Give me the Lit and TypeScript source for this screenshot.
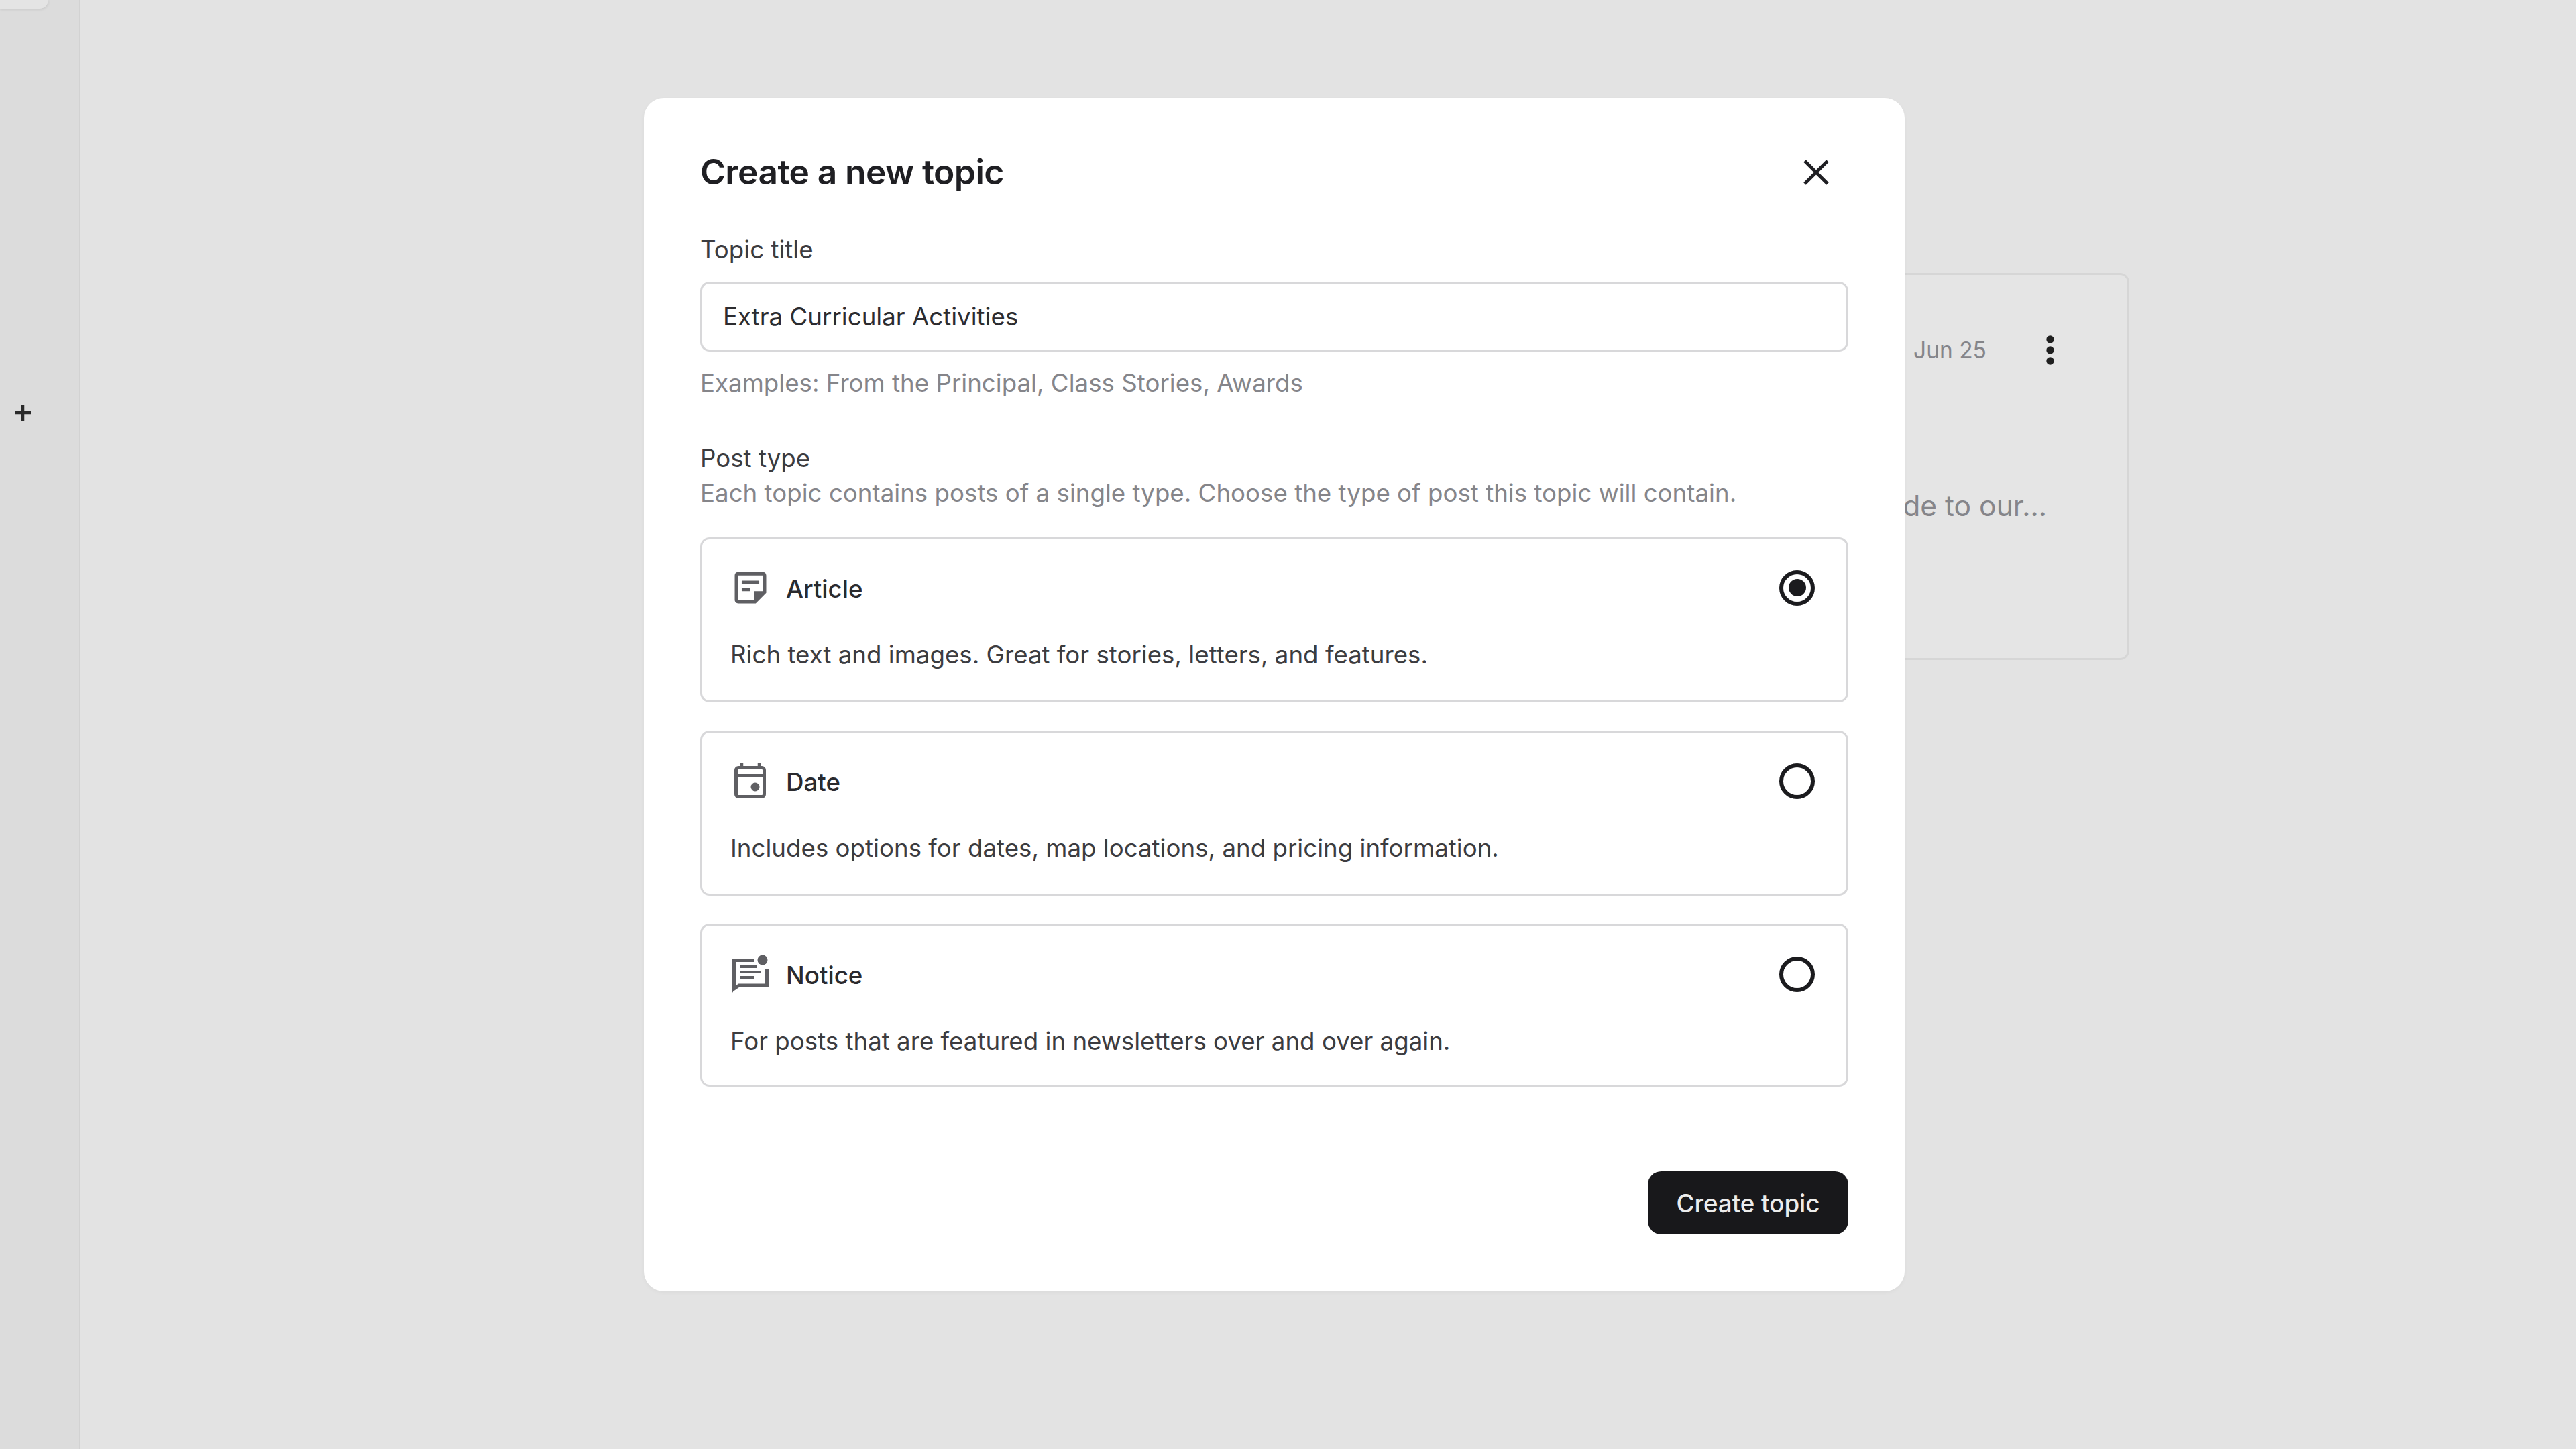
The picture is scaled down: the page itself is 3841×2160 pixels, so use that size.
import { LitElement, html, css, svg } from "lit";
import { customElement } from "lit/decorators.js";

const stickyIcon = svg`<svg class="ico" viewBox="0.5 0.5 23 23"><path fill="currentColor" d="M19,5v9l-5,0l0,5L5,19V5H19 M19,3H5C3.9,3,3,3.9,3,5v14c0,1.1,0.9,2,2,2h10l6-6V5C21,3.9,20.1,3,19,3z M12,14H7v-2h5V14z M17,10H7V8h10V10z"/></svg>`;
const calIcon = svg`<svg class="ico" viewBox="0 0 60 60"><g fill="none" stroke="currentColor"><rect x="8.5" y="10.5" width="42" height="43" rx="3.5" stroke-width="5"/><path d="M8 22.5H51" stroke-width="5"/><path d="M17 3V10M43 3V10" stroke-width="4.5"/></g><circle cx="37" cy="39" r="6.5" fill="currentColor"/></svg>`;
const noticeIcon = svg`<svg class="ico" viewBox="0 0 60 60"><path fill="none" stroke="currentColor" stroke-width="5" d="M36 9.5H5.5V52L13 47H54.5V22"/><path fill="currentColor" d="M3 44H8V50L3 58Z"/><path fill="none" stroke="currentColor" stroke-width="4" d="M14 19H40M14 27H46M14 35H35"/><circle cx="48" cy="9" r="7.5" fill="currentColor"/></svg>`;

const options = [
  { name: "Article", desc: "Rich text and images. Great for stories, letters, and features.", icon: stickyIcon, on: true },
  { name: "Date", desc: "Includes options for dates, map locations, and pricing information.", icon: calIcon, on: false },
  { name: "Notice", desc: "For posts that are featured in newsletters over and over again.", icon: noticeIcon, on: false },
];

@customElement("app-root")
export class AppRoot extends LitElement {
  static styles = css`
    :host {
      display: block;
      position: relative;
      width: 3841px;
      height: 2160px;
      overflow: hidden;
      background: #e3e3e3;
      font-family: Inter, "Noto Sans", sans-serif;
    }
    .page { display: flex; width: 100%; height: 100%; }
    .side {
      box-sizing: border-box;
      width: 120px;
      flex: none;
      background: #dcdcdc;
      border-right: 2px solid #d2d2d2;
      display: flex;
      flex-direction: column;
      align-items: flex-start;
    }
    .tab {
      width: 72px;
      height: 13px;
      background: #e4e4e4;
      border-radius: 0 0 16px 0;
      box-shadow: 0 1px 4px rgba(0, 0, 0, 0.12);
    }
    .plus { width: 28px; height: 28px; margin: 588px 0 0 20px; color: #2a2a2a; }
    .main {
      flex: 1;
      display: flex;
      justify-content: flex-end;
      align-items: flex-start;
      padding: 407px 666px 0 0;
    }
    .bgcard {
      box-sizing: border-box;
      width: 1000px;
      height: 577px;
      background: #e5e5e5;
      border: 3px solid #d6d6d6;
      border-radius: 14px;
      display: flex;
      flex-direction: column;
      align-items: flex-end;
      padding: 90px 109px 0 0;
    }
    .bgrow { display: flex; align-items: center; gap: 89px; height: 44px; }
    .date { font-size: 33.5px; line-height: 44px; color: #85858a; }
    .dots { width: 12px; height: 44px; }
    .snippet {
      margin: 184px 11px 0 0;
      font-size: 42.6px;
      line-height: 52px;
      color: #85858a;
    }
    .modal {
      position: absolute;
      left: 960px;
      top: 146px;
      box-sizing: border-box;
      width: 1880px;
      height: 1779px;
      padding: 85px 84px 85px 84px;
      background: #fff;
      border-radius: 30px;
      display: flex;
      flex-direction: column;
      box-shadow: 0 2px 6px rgba(0, 0, 0, 0.04);
    }
    .head { display: flex; justify-content: space-between; align-items: center; height: 52px; }
    h1 { margin: 0 0 2px; font-size: 51.5px; line-height: 50px; font-weight: 600; color: #1f1f23; letter-spacing: -0.6px; }
    .close { width: 44px; height: 44px; margin-right: 26px; color: #1f1f23; }
    .label { font-size: 36.7px; line-height: 50px; color: #3c3c40; }
    .l1 { margin-top: 64px; }
    .input {
      box-sizing: border-box;
      height: 104px;
      margin-top: 23px;
      padding: 0 0 2px 31px;
      display: flex;
      align-items: center;
      border: 3px solid #d8d8da;
      border-radius: 14px;
      font-size: 36.7px;
      color: #2c2c30;
    }
    .hint { font-size: 36.7px; line-height: 50px; color: #85858a; }
    .h1 { margin-top: 22px; }
    .l2 { margin-top: 62px; }
    .h2 { margin-top: 2px; }
    .opts { display: flex; flex-direction: column; gap: 42px; margin-top: 41px; }
    .opt {
      box-sizing: border-box;
      height: 246px;
      padding: 42px 47px 0 42px;
      border: 3px solid #d8d8da;
      border-radius: 14px;
      display: flex;
      flex-direction: column;
    }
    .opt.last { height: 243px; }
    .optrow { display: flex; align-items: center; height: 60px; }
    .ico { width: 60px; height: 60px; color: #5f5f63; flex: none; }
    .name { margin-left: 23px; flex: 1; font-size: 36.7px; font-weight: 500; color: #2a2a2e; padding-top: 3px; }
    .radio {
      box-sizing: border-box;
      width: 53px;
      height: 53px;
      border: 6px solid #1b1b1e;
      border-radius: 50%;
      display: flex;
      align-items: center;
      justify-content: center;
    }
    .radio i { width: 26px; height: 26px; border-radius: 50%; background: #1b1b1e; }
    .desc { margin-top: 45px; font-size: 36.7px; line-height: 50px; color: #3c3c40; }
    .foot { margin-top: auto; display: flex; justify-content: flex-end; }
    .btn {
      box-sizing: border-box;
      width: 299px;
      height: 94px;
      display: flex;
      align-items: center;
      justify-content: center;
      border-radius: 20px;
      background: #18181b;
      color: #ececec;
      font-size: 36.7px;
      font-weight: 500;
    }
  `;

  render() {
    return html`
      <div class="page">
        <aside class="side">
          <div class="tab"></div>
          <svg class="plus" viewBox="0 0 28 28"><path d="M14 2V26M2 14H26" stroke="currentColor" stroke-width="4.5" fill="none"/></svg>
        </aside>
        <main class="main">
          <div class="bgcard">
            <div class="bgrow">
              <span class="date">Jun 25</span>
              <svg class="dots" viewBox="0 0 12 44" fill="#1f1f1f"><circle cx="6" cy="6" r="5.7"/><circle cx="6" cy="22" r="5.7"/><circle cx="6" cy="38" r="5.7"/></svg>
            </div>
            <div class="snippet">de to our...</div>
          </div>
        </main>
      </div>
      <section class="modal">
        <div class="head">
          <h1>Create a new topic</h1>
          <svg class="close" viewBox="0 0 44 44"><path d="M5 5L39 39M39 5L5 39" stroke="currentColor" stroke-width="5" fill="none"/></svg>
        </div>
        <div class="label l1">Topic title</div>
        <div class="input">Extra Curricular Activities</div>
        <div class="hint h1">Examples: From the Principal, Class Stories, Awards</div>
        <div class="label l2">Post type</div>
        <div class="hint h2">Each topic contains posts of a single type. Choose the type of post this topic will contain.</div>
        <div class="opts">
          ${options.map(
            (o, i) => html`
              <div class="opt ${i === 2 ? "last" : ""}">
                <div class="optrow">
                  ${o.icon}
                  <span class="name">${o.name}</span>
                  <span class="radio">${o.on ? html`<i></i>` : ""}</span>
                </div>
                <div class="desc">${o.desc}</div>
              </div>
            `
          )}
        </div>
        <div class="foot"><div class="btn">Create topic</div></div>
      </section>
    `;
  }
}
